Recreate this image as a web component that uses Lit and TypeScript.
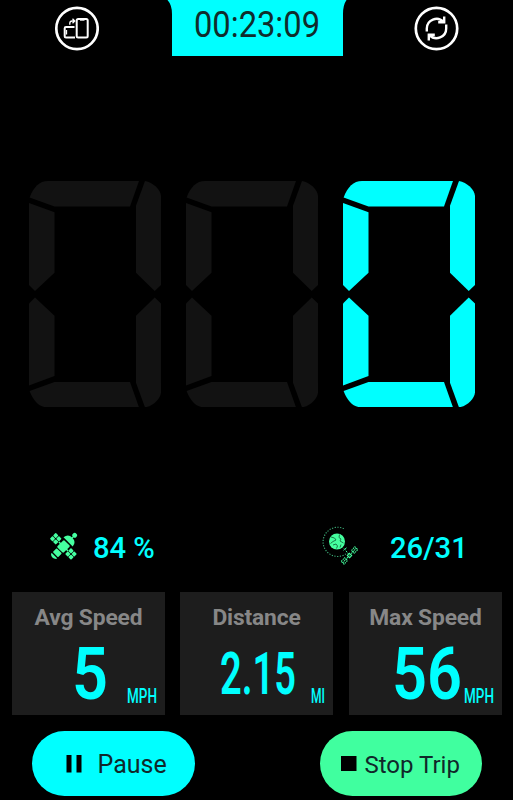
import { LitElement, html, css, svg } from "lit";
import { customElement, property } from "lit/decorators.js";

/** Natural advance widths of the readout characters, in em. */
const ADVANCE: Record<string, number> = { ":": 0.25, ".": 0.28, M: 0.873, P: 0.631, H: 0.713, I: 0.272 };

/** Text in the readout face, scaled horizontally to a fixed advance width. */
@customElement("readout-text")
class ReadoutText extends LitElement {
  @property() text = "";
  @property({ type: Number }) size = 20;
  @property({ type: Number }) width = 40;
  @property({ type: Number }) weight = 400;
  static styles = css`
    :host { display: block; }
    svg { display: block; overflow: visible; }
    text { font-family: Roboto, "Liberation Sans", sans-serif; fill: currentColor; }
  `;
  render() {
    const cap = this.size * 0.711;
    const natural = [...this.text].reduce((sum, c) => sum + (ADVANCE[c] ?? 0.565) * this.size, 0);
    const k = natural ? this.width / natural : 1;
    return html`<svg width=${this.width} height=${cap}>
      <text x="0" y=${cap} transform="scale(${k} 1)" font-size=${this.size} font-weight=${this.weight}
        textLength=${natural} lengthAdjust="spacingAndGlyphs">${this.text}</text>
    </svg>`;
  }
}

const HALF = svg`
  <path d="M.6 16.4C4.5 6 10.500 0 19 0H110L101 25.400H25.500Z"/>
  <path d="M0 22L25.500 31.300V91.700L6 110L0 104Z"/>
  <path d="M116 0C124 1.500 131.500 8.500 132 15V104L125.700 110L107 91.700V24.700Z"/>`;

@customElement("speed-cell")
class SpeedCell extends LitElement {
  @property({ type: Boolean, reflect: true }) lit = false;
  static styles = css`
    :host { display: block; width: 132px; height: 226.400px; color: #121212; }
    :host([lit]) { color: #00ffff; }
    svg { display: block; fill: currentColor; }
  `;
  render() {
    return html`<svg width="132" height="226.4" viewBox="0 0 132 226.4">
      ${HALF}<g transform="translate(0 226.4) scale(1 -1)">${HALF}</g>
    </svg>`;
  }
}

@customElement("stat-card")
class StatCard extends LitElement {
  @property() label = "";
  @property() value = "";
  @property() unit = "";
  @property({ type: Number }) size = 73;
  @property({ type: Number }) span = 40;
  @property({ type: Number }) unitSpan = 30;
  static styles = css`
    :host { display: block; box-sizing: border-box; width: 153px; height: 123px;
      background: #1d1d1d; position: relative; padding-top: 12px; }
    .label { font: 700 22.800px/28px Roboto, sans-serif; letter-spacing: -.15px; color: #878787; text-align: center; white-space: nowrap; }
    .value { height: 84px; margin-top: -1px; padding-left: 2px; display: flex; align-items: center; justify-content: center; color: #00ffff; }
    .unit { position: absolute; right: 8px; bottom: 11.500px; color: #00ffff; }
  `;
  render() {
    return html`<div class="label">${this.label}</div>
      <div class="value"><readout-text .text=${this.value} .size=${this.size} .width=${this.span} .weight=${600}></readout-text></div>
      <readout-text class="unit" .text=${this.unit} .size=${20} .width=${this.unitSpan} .weight=${500}></readout-text>`;
  }
}

@customElement("app-root")
class AppRoot extends LitElement {
  static styles = css`
    :host { display: flex; flex-direction: column; width: 513px; height: 800px; background: #000;
      overflow: hidden; font-family: Roboto, sans-serif; }
    svg { display: block; }
    header { height: 56px; display: flex; justify-content: space-between; padding: 0 54px; }
    .round { margin-top: 6px; }
    .timer { width: 180px; height: 56px; box-sizing: border-box; padding: 10px 0 0 27px; color: #102c2c;
      background: #00ffff; clip-path: path("M1 0H180Q176.500 5 176.500 14V56H5.500V14Q5.500 5 1 0Z"); }
    .speed { margin: 125px 0 0 29px; height: 227px; display: flex; gap: 25.200px; }
    .signals { margin-top: 117px; height: 44px; display: flex; color: #00ffff;
      font: 500 29.200px/47px Roboto, sans-serif; white-space: pre; }
    .sat { margin: 7px 15px 0 49px; }
    .first { width: 227px; letter-spacing: -.1px; }
    .orbit { margin: 0 32px 0 0; }
    .stats { margin: 23px 11px 0 12px; display: flex; gap: 15px; }
    .stats > :last-child { margin-left: 1px; }
    .actions { margin: 16px 31px 0 32px; display: flex; justify-content: space-between; }
    button { all: unset; box-sizing: border-box; width: 162.500px; height: 65px; border-radius: 33px;
      display: flex; align-items: center; color: #10282a; font: 400 25px/30px Roboto, sans-serif; white-space: nowrap; }
    .pause { background: #00ffff; padding-left: 34px; gap: 15.500px; }
    .stop { background: #40ff9f; padding-left: 21.500px; gap: 8px; font-size: 24px; }
    .label { padding-top: 2px; }
  `;

  render() {
    return html`
      <header>
        <svg class="round" width="45" height="45" viewBox="0 0 45 45" fill="none" stroke="#fff">
          <circle cx="23" cy="22.500" r="20.700" stroke-width="2.700"/>
          <rect x="22.700" y="13" width="11" height="18.500" rx="1.500" stroke-width="2"/>
          <path d="M26 13.800h4.500" stroke-width="1.800"/>
          <path d="M20.500 21H12Q10.700 21 10.700 22.300V30.200Q10.700 31.500 12 31.500H21" stroke-width="2"/>
          <path d="M12.500 24v4.500" stroke-width="1.300"/>
          <path d="M15.800 18.800v-1.500q0-2.300 2.300-2.300h2.200M18.500 12.700l2.300 2.300-2.300 2.300" stroke-width="1.300"/>
        </svg>
        <div class="timer"><readout-text .text=${"00:23:09"} .size=${37.5} .width=${126} .weight=${400}></readout-text></div>
        <svg class="round" width="45" height="45" viewBox="0 0 45 45" fill="none" stroke="#fff">
          <circle cx="22.500" cy="22.500" r="20.700" stroke-width="2.700"/>
          <g stroke-width="2.400">
            <path d="M12.800 25.500V22.500A9.700 9.700 0 0 1 29.500 15.800M32.200 18.500V22.500A9.700 9.700 0 0 1 15.500 29.200"/>
            <path d="M30.200 10.500V16.300H24.200M14.800 34.500V28.700H20.800"/>
          </g>
        </svg>
      </header>

      <section class="speed" role="img" aria-label="Speed 0">
        <speed-cell></speed-cell><speed-cell></speed-cell><speed-cell lit></speed-cell>
      </section>

      <section class="signals">
        <svg class="sat" width="29" height="29" viewBox="0 0 29 29" fill="#45ffa0">
          <g transform="translate(14.500 14.500) rotate(45)">
            <rect x="-4.500" y="-5" width="9" height="10" rx="1.200"/>
            ${[-15.2, -10.7, 6.4, 10.9].map(x => [-4.2, 0.3].map(y => svg`<rect x=${x} y=${y} width="3.900" height="3.900" rx=".8"/>`))}
            <rect x="-6.500" y="-.7" width="13" height="1.400"/>
            <path d="M-6.500 -6.500Q-6 -12.500 0 -12.500T6.500 -6.500Z"/>
            <circle cx="0" cy="-15.800" r="2.400"/>
            <rect x="-.6" y="-14" width="1.200" height="3"/>
            <rect x="-3.700" y="6" width="7.400" height="5.500" rx=".8"/>
            <path d="M-3.700 12.800h7.400v1.200q-3.700 3.400-7.400 0Z"/>
          </g>
        </svg>
        <span class="first">84 %</span>
        <svg class="orbit" width="38" height="41" viewBox="0 0 38 41" fill="none" stroke="#45ff9f">
          <path d="M23.800 3.600A14.600 14.600 0 1 0 26.500 28.500" stroke="#3fb47d" stroke-width="1.100" stroke-dasharray="1.200 1.500"/>
          <circle cx="17" cy="16.500" r="8" fill="#45ff9f" stroke="none"/>
          <path d="M11 12l3.500 1 1.500 2-3 1.500-2.500 2M13 20l3-1 1.500 2-1 2.500M19.500 9.500l-.5 3 2 1.500-1 2 3.500 2M21 19.500l-1 3" stroke="#1a7a4a" stroke-width="1"/>
          <path d="M24 23.500l5 6M26.500 22.800l-3 2.500" stroke-dasharray="2 1"/>
          <g transform="translate(29.500 30.500) rotate(-47)">
            <path d="M-10 0h20" stroke-width="1" stroke-dasharray="1.500 .6"/>
            <rect x="-1.600" y="-1.600" width="3.200" height="3.200" stroke-width="1"/>
            <g stroke-width="1" stroke-dasharray="1.500 .8"><rect x="-10" y="-2" width="5" height="4"/><rect x="5" y="-2" width="5" height="4"/></g>
          </g>
        </svg>
        <span>26/31</span>
      </section>

      <section class="stats">
        <stat-card label="Avg Speed" value="5" unit="MPH" .size=${73} .span=${36}></stat-card>
        <stat-card label="Distance" value="2.15" unit="MI" .size=${59} .span=${76} .unitSpan=${14}></stat-card>
        <stat-card label="Max Speed" value="56" unit="MPH" .size=${73} .span=${70}></stat-card>
      </section>

      <section class="actions">
        <button class="pause">
          <svg width="16" height="18" fill="#000"><path d="M.5 0h5v17.500h-5zM10.500 0h5v17.500h-5z"/></svg>
          <span class="label">Pause</span>
        </button>
        <button class="stop">
          <svg width="15.500" height="15.500" fill="#000"><path d="M0 0h15.500v15.500H0z"/></svg>
          <span class="label">Stop Trip</span>
        </button>
      </section>
    `;
  }
}
